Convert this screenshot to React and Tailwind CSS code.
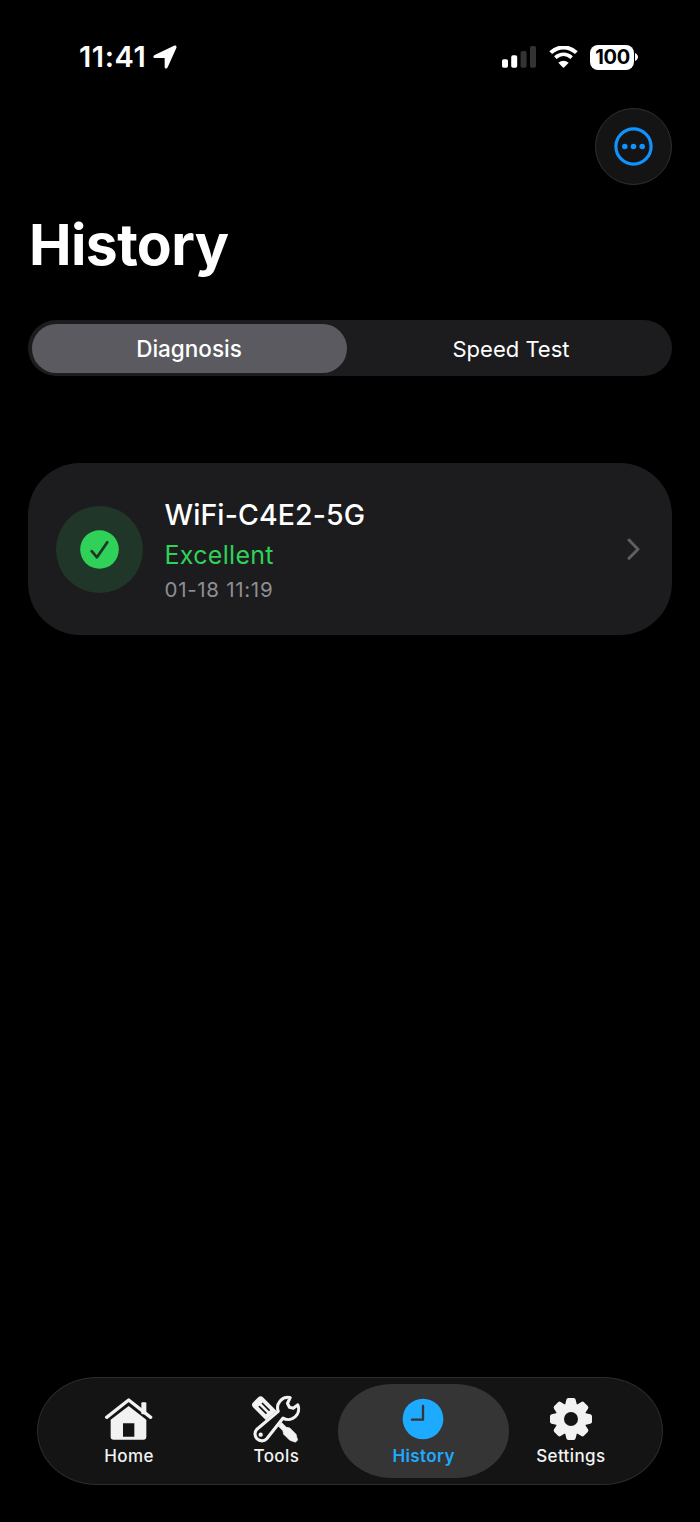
import { useState } from "react";

const HomeIcon = () => (
  <svg width="49" height="44" viewBox="0 0 147 132" fill="currentColor" className="relative -left-[1px]">
    <rect x="112" y="16" width="15" height="36" rx="3" />
    <path d="M8 61 74 9l66 52" fill="none" stroke="currentColor" strokeWidth="10" strokeLinecap="round" strokeLinejoin="round" />
    <path fillRule="evenodd" d="M20 68 74 27l53 41v51a9 9 0 0 1-9 9H29a9 9 0 0 1-9-9ZM57 79v40h34V79Z" />
  </svg>
);

const WRENCH = "M129 23A31 31 0 0 0 94 64L30 118A19 19 0 1 0 59 146L108 84A31 31 0 0 0 152 45L139 55 127 52 121 40Z";

const ToolsIcon = () => (
  <svg width="58" height="58" viewBox="0 0 174 174" className="shrink-0">
    {/* screwdriver */}
    <g transform="translate(16 20) rotate(45)" fill="currentColor">
      <rect x="14" y="-21" width="76" height="42" rx="11" />
      <rect x="86" y="-8" width="64" height="16" />
      <path d="M138-8 146-13 172-13 188-4V5L172 13 146 13 138 8Z" stroke="currentColor" strokeWidth="2" strokeLinejoin="round" />
      <path d="M36-7H64M36 6H64" stroke="#141414" strokeWidth="5" strokeLinecap="round" />
    </g>
    {/* wrench */}
    <path d={WRENCH} fill="#141414" stroke="#bdbdbd" strokeWidth="10" strokeLinejoin="round" />
    <path d={WRENCH} fill="#141414" stroke="currentColor" strokeWidth="8.500" strokeLinejoin="round" />
    <circle cx="41" cy="134" r="6.500" fill="currentColor" />
  </svg>
);

const HistoryIcon = () => (
  <svg width="42" height="42" viewBox="0 0 126 126" className="relative -left-[1px]">
    <circle cx="63" cy="63" r="61" fill="currentColor" />
    <path d="M63 24v41H30" fill="none" stroke="#353535" strokeWidth="7" strokeLinecap="round" strokeLinejoin="round" />
  </svg>
);

const SettingsIcon = () => (
  <svg width="42" height="42" viewBox="0 0 126 126" fill="currentColor">
    {[0, 45, 90, 135, 180, 225, 270, 315].map((a) => (
      <path
        key={a}
        d="M45 22 49 5Q50 0 55 0h16q5 0 6 5l4 17Z"
        transform={`rotate(${a} 63 63)`}
      />
    ))}
    <circle cx="63" cy="63" r="34" fill="none" stroke="currentColor" strokeWidth="26" />
  </svg>
);

const TABS = [
  { label: "Home", Icon: HomeIcon },
  { label: "Tools", Icon: ToolsIcon },
  { label: "History", Icon: HistoryIcon },
  { label: "Settings", Icon: SettingsIcon },
];

function StatusBar() {
  return (
    <div className="h-[108px] pt-[39px] pl-[79px] pr-[62px] flex items-start justify-between">
      <div className="flex items-center h-9 gap-[7px]">
        <span className="text-[29px] font-semibold leading-9 tracking-[0.6px]">11:41</span>
        <svg width="24" height="24" viewBox="0 0 72 72" fill="currentColor">
          <path d="M5 30 63 2c6-2 9 2 7 7L44 67c-3 6-9 4-9-1V39H7c-7 0-8-6-2-9Z" />
        </svg>
      </div>
      <div className="flex items-center h-9">
        <svg width="34" height="22" viewBox="0 0 34 22" fill="currentColor">
          <rect y="13.3" width="6" height="8.5" rx="1.7" />
          <rect x="9.2" y="9.2" width="6" height="12.6" rx="1.7" />
          <rect x="18.6" y="5" width="6" height="16.8" rx="1.7" fill="#333" />
          <rect x="28" width="6" height="21.8" rx="1.7" fill="#333" />
        </svg>
        <svg width="29" height="22" viewBox="0 0 87 66" className="ml-[13px]">
          <path d="M5 20C27-1 60-1 82 20" fill="none" stroke="currentColor" strokeWidth="12" />
          <path d="M19 35C34 22 53 22 68 35" fill="none" stroke="currentColor" strokeWidth="11" />
          <path d="M28 50C38 42 49 42 59 50L46 64q-2.500 2-5 0Z" fill="currentColor" />
        </svg>
        <div className="ml-[12px] w-[44px] h-[25px] pl-px rounded-[8px] bg-white text-black text-[20px] font-bold leading-[25px] text-center tracking-[-0.3px]">
          100
        </div>
        <svg width="3" height="8" viewBox="0 0 3 8" fill="currentColor" className="ml-px">
          <path d="M0 0c4 2 4 6 0 8Z" />
        </svg>
      </div>
    </div>
  );
}

export default function App() {
  const [segment, setSegment] = useState("Diagnosis");
  const [tab, setTab] = useState("History");

  return (
    <div className="w-[700px] h-[1522px] bg-black text-white flex flex-col overflow-hidden font-['Inter',sans-serif]">
      <StatusBar />

      <header className="px-7">
        <div className="flex justify-end">
          <button aria-label="More" className="size-[77px] rounded-full bg-[#141414] border-[1.5px] border-[#303030] flex items-center justify-center">
            <svg width="39" height="39" viewBox="0 0 39 39" fill="#0f93ff">
              <circle cx="19.500" cy="19.500" r="17.600" fill="none" stroke="#0f93ff" strokeWidth="3.200" />
              <circle cx="10.800" cy="19.500" r="2.800" />
              <circle cx="19.500" cy="19.500" r="2.800" />
              <circle cx="28.200" cy="19.500" r="2.800" />
            </svg>
          </button>
        </div>
        <h1 className="mt-6 ml-px text-[57px] font-bold leading-[72px] tracking-[-0.6px]">History</h1>
      </header>

      {/* Segmented control */}
      <div className="mx-7 mt-[39px] h-14 px-[3.500px] pt-[4px] pb-[3px] rounded-full bg-[#1c1c1e] grid grid-cols-[315px_1fr]">
        {["Diagnosis", "Speed Test"].map((name) => (
          <button
            key={name}
            onClick={() => setSegment(name)}
            className={`rounded-full ${segment === name ? "bg-[#5b5a60] text-[22.500px] font-medium" : "pl-[7px] pt-px text-[22px] font-normal"}`}
          >
            {name}
          </button>
        ))}
      </div>

      {/* Result card */}
      <div className="mx-7 mt-[87px] h-[172px] rounded-[52px] bg-[#1c1c1e] pl-7 pr-[32px] flex items-center">
        <div className="size-[87px] rounded-full bg-[#203628] flex items-center justify-center">
          <svg width="39" height="39" viewBox="0 0 39 39">
            <circle cx="19.500" cy="19.500" r="19.300" fill="#30d158" />
            <path d="M11.700 21.200 17 27.300 27.300 12.300" fill="none" stroke="#203628" strokeWidth="2.800" strokeLinecap="round" strokeLinejoin="round" />
          </svg>
        </div>
        <div className="ml-[21.500px] pt-0.5 flex-1">
          <div className="text-[28.500px] font-medium leading-9 tracking-[0.1px]">WiFi-C4E2-5G</div>
          <div className="mt-1.5 text-[25px] leading-8 tracking-[0.3px] text-[#30d158]">Excellent</div>
          <div className="mt-[5px] text-[20.500px] leading-7 tracking-[0.7px] text-[#8e8e93]">01-18 11:19</div>
        </div>
        <svg width="13" height="22" viewBox="0 0 13 22" fill="none" stroke="#5f5f63" strokeWidth="3" strokeLinecap="round" strokeLinejoin="round">
          <path d="M2 2 11 11.200 2 20.300" />
        </svg>
      </div>

      {/* Tab bar */}
      <nav className="mt-auto mb-[37px] mx-[37px] h-[108px] px-[17.500px] py-[6px] rounded-[60px/54px] bg-[#141414] border-[1.5px] border-[#2c2c2c] grid grid-cols-4">
        {TABS.map(({ label, Icon }) => (
          <button
            key={label}
            onClick={() => setTab(label)}
            className={`-mx-3 flex flex-col items-center rounded-[54px/47px] ${tab === label ? "bg-[#353535] text-[#1eaaff] font-semibold" : "text-[#f2f2f2] font-medium"}`}
          >
            <span className="mt-2.5 h-[50px] flex items-center"><Icon /></span>
            <span className="text-[17px] leading-6 tracking-[0.4px]">{label}</span>
          </button>
        ))}
      </nav>
    </div>
  );
}
